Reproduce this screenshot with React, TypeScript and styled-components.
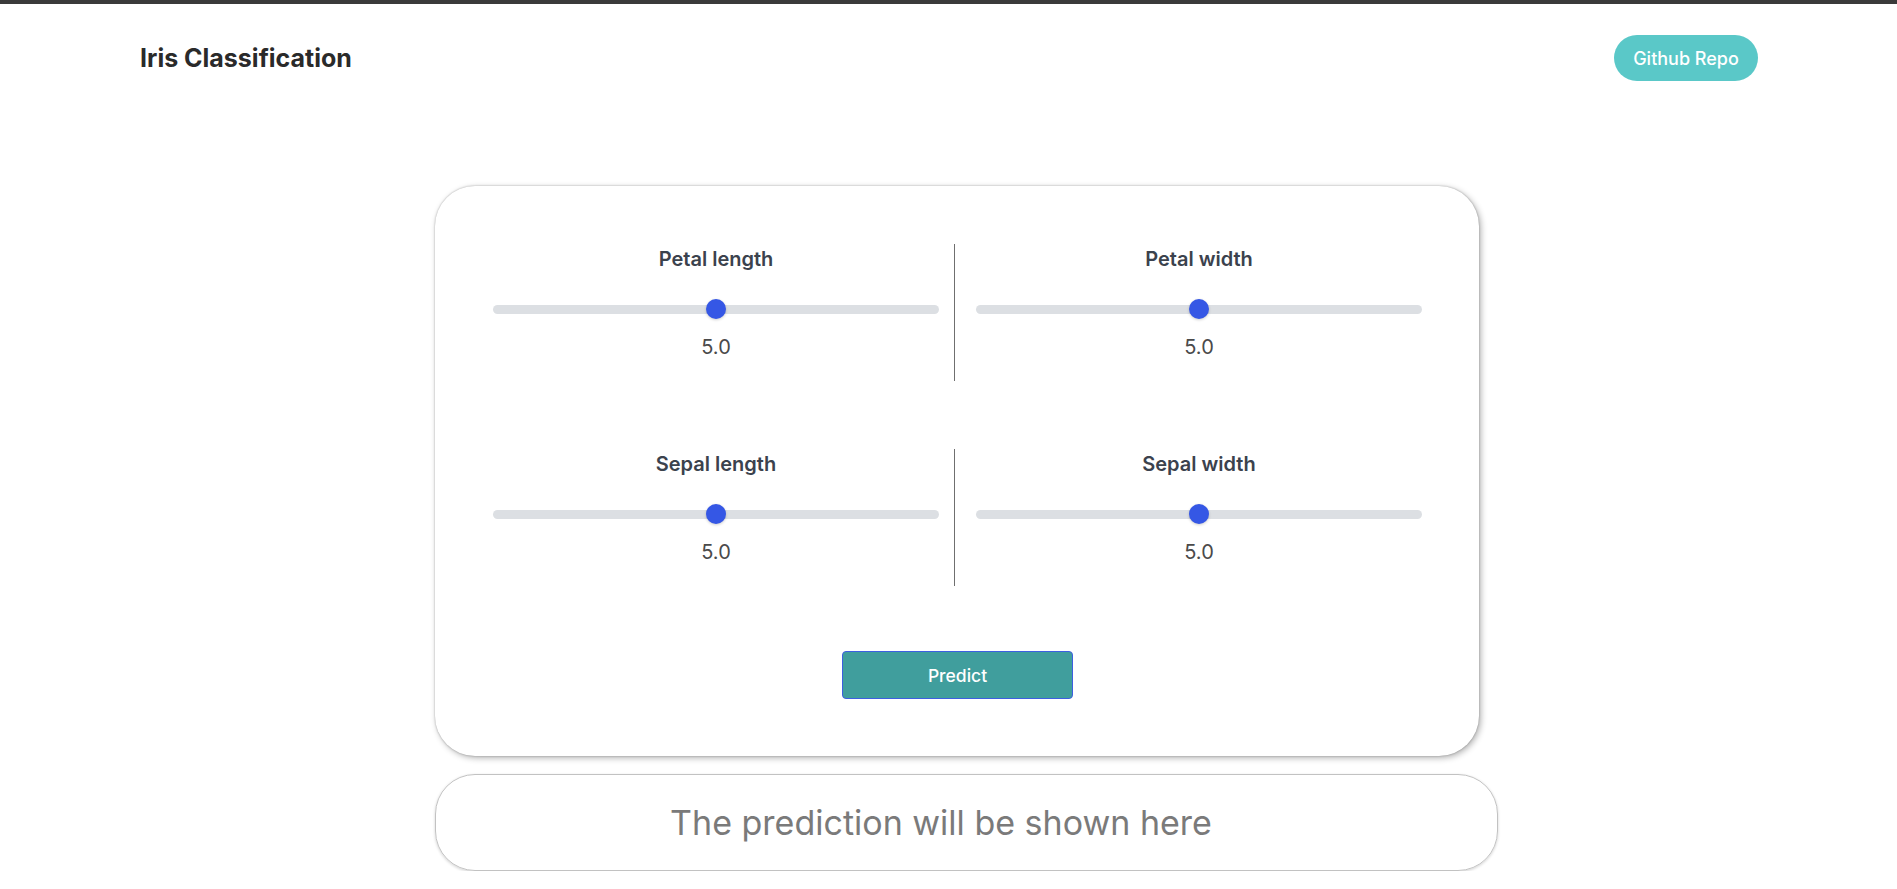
import React from "react";
import styled, { createGlobalStyle } from "styled-components";

const GlobalStyle = createGlobalStyle`
  * { box-sizing: border-box; }
  html, body { margin: 0; padding: 0; background: #ffffff; }
  body { font-family: Inter, "Noto Sans", sans-serif; color: #2b2b2b; }
`;

const TopBar = styled.div`
  height: 4px;
  background: #3a3a3a;
`;

const Header = styled.header`
  display: flex;
  align-items: center;
  justify-content: space-between;
  height: 46px;
  margin-top: 31px;
  padding: 0 139px 0 140px;
`;

const Title = styled.h1`
  margin: 0;
  font-size: 25px;
  line-height: 32px;
  font-weight: 700;
  color: #2a2a2a;
`;

const RepoButton = styled.a`
  display: inline-flex;
  align-items: center;
  justify-content: center;
  width: 144px;
  height: 46px;
  border-radius: 23px;
  background: #5ac8c8;
  color: #ffffff;
  font-size: 18px;
  font-weight: 500;
  text-decoration: none;
`;

const Main = styled.main`
  display: flex;
  flex-direction: column;
  align-items: flex-start;
  margin: 105px 0 0 435px;
`;

const Card = styled.section`
  width: 1044px;
  padding: 58px 57px 57px 58px;
  border-radius: 40px;
  background: #ffffff;
  box-shadow: 2px 2px 6px rgba(0, 0, 0, 0.3), 0 0 2px rgba(0, 0, 0, 0.3);
  display: flex;
  flex-direction: column;
  align-items: center;
`;

const Rows = styled.div`
  width: 100%;
  display: flex;
  flex-direction: column;
  gap: 68px;
`;

const Row = styled.div`
  display: grid;
  grid-template-columns: minmax(0, 1fr) auto minmax(0, 1fr);
  height: 137px;
`;

const Divider = styled.div`
  background: #6f6f6f;
  margin: 0 21px 0 15px;
  width: 1px;
`;

const Cell = styled.div`
  display: flex;
  flex-direction: column;
  align-items: center;
  padding-top: 3px;
  min-width: 0;
`;

const Label = styled.div`
  font-size: 20px;
  line-height: 24px;
  font-weight: 600;
  color: #3b424d;
`;

const Range = styled.input`
  -webkit-appearance: none;
  appearance: none;
  width: 100%;
  height: 20px;
  margin: 28px 0 0;
  padding: 0;
  background: transparent;
  outline: none;

  &::-webkit-slider-runnable-track {
    height: 9px;
    border-radius: 5px;
    background: #dcdfe3;
  }
  &::-webkit-slider-thumb {
    -webkit-appearance: none;
    appearance: none;
    width: 20px;
    height: 20px;
    margin-top: -5.5px;
    border-radius: 50%;
    background: #3557e5;
    border: none;
    box-shadow: 0 1px 3px rgba(0, 0, 0, 0.2);
  }
  &::-moz-range-track {
    height: 9px;
    border-radius: 5px;
    background: #dcdfe3;
  }
  &::-moz-range-thumb {
    width: 20px;
    height: 20px;
    border-radius: 50%;
    background: #3557e5;
    border: none;
  }
`;

const Value = styled.div`
  margin-top: 16px;
  font-size: 20px;
  line-height: 24px;
  font-weight: 400;
  color: #4a4a4a;
`;

const PredictButton = styled.button`
  margin-top: 65px;
  width: 231px;
  height: 48px;
  border: 1px solid #3d5fe0;
  border-radius: 4px;
  background: #409e9d;
  color: #ffffff;
  font-family: Inter, "Noto Sans", sans-serif;
  font-size: 17.5px;
  font-weight: 500;
  cursor: pointer;
`;

const Result = styled.div`
  margin-top: 18px;
  width: 1063px;
  height: 97px;
  border: 1px solid #c2c2c2;
  border-radius: 40px;
  box-shadow: 0 1px 3px rgba(0, 0, 0, 0.18);
  display: flex;
  align-items: center;
  justify-content: center;
  padding-right: 51px;
  font-size: 34px;
  font-weight: 400;
  color: #7a7a7a;
`;

type Feature = { label: string; value: number };

const rows: Feature[][] = [
  [
    { label: "Petal length", value: 5 },
    { label: "Petal width", value: 5 },
  ],
  [
    { label: "Sepal length", value: 5 },
    { label: "Sepal width", value: 5 },
  ],
];

function SliderCell({ label, value }: Feature) {
  return (
    <Cell>
      <Label>{label}</Label>
      <Range type="range" min={1} max={9} step={0.1} defaultValue={value} />
      <Value>{value.toFixed(1)}</Value>
    </Cell>
  );
}

export default function App() {
  return (
    <>
      <GlobalStyle />
      <TopBar />
      <Header>
        <Title>Iris Classification</Title>
        <RepoButton href="#">Github Repo</RepoButton>
      </Header>
      <Main>
        <Card>
          <Rows>
            {rows.map((pair, i) => (
              <Row key={i}>
                <SliderCell {...pair[0]} />
                <Divider />
                <SliderCell {...pair[1]} />
              </Row>
            ))}
          </Rows>
          <PredictButton>Predict</PredictButton>
        </Card>
        <Result>The prediction will be shown here</Result>
      </Main>
    </>
  );
}
